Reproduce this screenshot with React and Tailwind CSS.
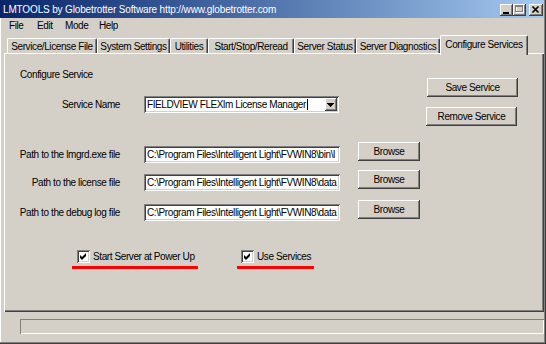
import React from "react";

const raised =
  "bg-[#d4d0c8] shadow-[inset_-1px_-1px_0_#404040,inset_1px_1px_0_#ffffff,inset_-2px_-2px_0_#808080]";
const sunken =
  "bg-white shadow-[inset_1px_1px_0_#808080,inset_-1px_-1px_0_#ffffff,inset_2px_2px_0_#404040,inset_-2px_-2px_0_#d4d0c8]";

const tabs = [
  { label: "Service/License File", w: "w-[90px]" },
  { label: "System Settings", w: "w-[73px]" },
  { label: "Utilities", w: "w-[38px]" },
  { label: "Start/Stop/Reread", w: "w-[86px]" },
  { label: "Server Status", w: "w-[62px]" },
  { label: "Server Diagnostics", w: "w-[84px]" },
];

const paths = [
  {
    label: "Path to the lmgrd.exe file",
    value: "C:\\Program Files\\Intelligent Light\\FVWIN8\\bin\\l",
    mt: "mt-[16px]",
  },
  {
    label: "Path to the license file",
    value: "C:\\Program Files\\Intelligent Light\\FVWIN8\\data",
    mt: "mt-[7px]",
  },
  {
    label: "Path to the debug log file",
    value: "C:\\Program Files\\Intelligent Light\\FVWIN8\\data",
    mt: "mt-[9px]",
  },
];

const Check = () => (
  <div className={`w-[13px] h-[13px] shrink-0 ${sunken}`}>
    <svg width="13" height="13" viewBox="0 0 13 13">
      <path d="M3 5 L5 7 L9 3 L9 6 L5 10 L3 8 Z" fill="#000" />
    </svg>
  </div>
);

const WinButton = ({ children, className = "" }) => (
  <button className={`${raised} flex items-center justify-center ${className}`}>
    {children}
  </button>
);

const Field = ({ value, className = "" }) => (
  <div className={`${sunken} h-[17px] pl-[3px] pr-[2px] overflow-hidden whitespace-nowrap leading-[17px] ${className}`}>
    {value}
  </div>
);

export default function App() {
  return (
    <div className="w-[546px] h-[344px] bg-[#d4d0c8] flex flex-col text-black text-[10px] tracking-[-0.4px] font-['Liberation_Sans',Arial,sans-serif] shadow-[inset_-1px_-1px_0_#404040,inset_-2px_-2px_0_#808080,inset_1px_0_0_#ffffff] overflow-hidden">
      {/* Title bar */}
      <div className="h-[18px] mr-[2px] flex items-start bg-linear-to-r from-[#0a246a] to-[#a6caf0]">
        <span className="pl-[3px] leading-[19px] text-white tracking-[-0.15px]">
          LMTOOLS by Globetrotter Software http://www.globetrotter.com
        </span>
        <div className="ml-auto flex pt-[4px] pr-[1px]">
          <WinButton className="w-[13px] h-[12px]">
            <svg width="13" height="12" viewBox="0 0 13 12">
              <rect x="3" y="8" width="6" height="2" fill="#000" />
            </svg>
          </WinButton>
          <WinButton className="w-[13px] h-[12px]">
            <svg width="13" height="12" viewBox="0 0 13 12">
              <rect x="3.5" y="2.5" width="7" height="6" fill="none" stroke="#ffffff" />
              <rect x="2.5" y="1.5" width="7" height="6" fill="none" stroke="#808080" />
              <rect x="2" y="2" width="8" height="1" fill="#808080" />
            </svg>
          </WinButton>
          <WinButton className="w-[14px] h-[12px] ml-[3px]">
            <svg width="14" height="12" viewBox="0 0 14 12">
              <path d="M3.5 2.5 L9.5 8.5 M9.5 2.5 L3.5 8.5" stroke="#000" strokeWidth="1.6" />
            </svg>
          </WinButton>
        </div>
      </div>

      {/* Menu */}
      <div className="h-[16px] flex items-center pl-[9px] leading-[16px]">
        <span className="w-[28px]">File</span>
        <span className="w-[28px]">Edit</span>
        <span className="w-[34px]">Mode</span>
        <span>Help</span>
      </div>

      {/* Tabs */}
      <div className="relative z-10 h-[19px] flex items-end pl-[7px]">
        {tabs.map((t) => (
          <div
            key={t.label}
            className={`${t.w} h-[15px] flex items-center justify-center whitespace-nowrap border-t border-l border-r border-t-white border-l-white border-r-[#404040] rounded-tl-[2px] rounded-tr-[2px] shadow-[inset_-1px_0_0_#808080]`}
          >
            {t.label}
          </div>
        ))}
        <div className="w-[88px] h-[20px] -mb-[2px] pb-[3px] bg-[#d4d0c8] flex items-center justify-center whitespace-nowrap border-t border-l border-r border-t-white border-l-white border-r-[#404040] rounded-tl-[2px] rounded-tr-[2px] shadow-[inset_-1px_0_0_#808080]">
          Configure Services
        </div>
      </div>

      {/* Panel */}
      <div className="ml-[4px] mr-[2px] h-[259px] flex flex-col shadow-[inset_1px_1px_0_#ffffff,inset_-1px_-1px_0_#404040,inset_-2px_-2px_0_#808080]">
        <div className="flex">
          <div className="flex-1 flex flex-col">
            <p className="ml-[16px] mt-[16px] h-[12px] leading-[12px]">Configure Service</p>
            <div className="flex mt-[15px]">
              <span className="w-[116px] text-right leading-[17px]">Service Name</span>
              <div className={`${sunken} ml-[24px] w-[195px] h-[17px] flex items-center pl-[3px] pr-[2px]`}>
                <span className="whitespace-nowrap leading-[13px]">FIELDVIEW FLEXlm License Manager</span>
                <span className="inline-block w-px h-[11px] bg-black ml-px" />
                <div className={`${raised} ml-auto w-[12px] h-[13px] flex items-center justify-center`}>
                  <svg width="12" height="13" viewBox="0 0 12 13">
                    <rect x="2" y="5" width="7" height="1" fill="#000" />
                    <rect x="3" y="6" width="5" height="1" fill="#000" />
                    <rect x="4" y="7" width="3" height="1" fill="#000" />
                    <rect x="5" y="8" width="1" height="1" fill="#000" />
                  </svg>
                </div>
              </div>
            </div>
          </div>
          <div className="flex flex-col items-end pt-[25px] pr-[26px] gap-[10px]">
            <WinButton className="w-[91px] h-[19px]">Save Service</WinButton>
            <WinButton className="w-[91px] h-[19px] mr-[1px]">Remove Service</WinButton>
          </div>
        </div>

        {paths.map((p) => (
          <div key={p.label} className={`flex items-start ${p.mt}`}>
            <span className="w-[116px] mt-[4px] text-right leading-[17px] whitespace-nowrap">{p.label}</span>
            <Field value={p.value} className="ml-[24px] mt-[4px] w-[196px]" />
            <WinButton className="ml-[18px] w-[62px] h-[19px]">Browse</WinButton>
          </div>
        ))}

        {/* Options */}
        <div className="flex items-start mt-[29px] ml-[68px]">
          <div className="flex flex-col w-[126px]">
            <div className="flex items-center h-[13px] pl-[5px]">
              <Check />
              <span className="ml-[3px] whitespace-nowrap">Start Server at Power Up</span>
            </div>
            <div className="mt-[3px] h-[3px] bg-[#ff0000]" />
          </div>
          <div className="flex flex-col w-[77px] ml-[39px]">
            <div className="flex items-center h-[13px] pl-[4px]">
              <Check />
              <span className="ml-[3px] whitespace-nowrap">Use Services</span>
            </div>
            <div className="mt-[3px] h-[3px] bg-[#ff0000]" />
          </div>
        </div>
      </div>

      {/* Status bar */}
      <div className="mt-[7px] ml-[20px] mr-[2px] h-[15px] shadow-[inset_1px_1px_0_#808080,inset_-1px_-1px_0_#ffffff]" />
    </div>
  );
}
